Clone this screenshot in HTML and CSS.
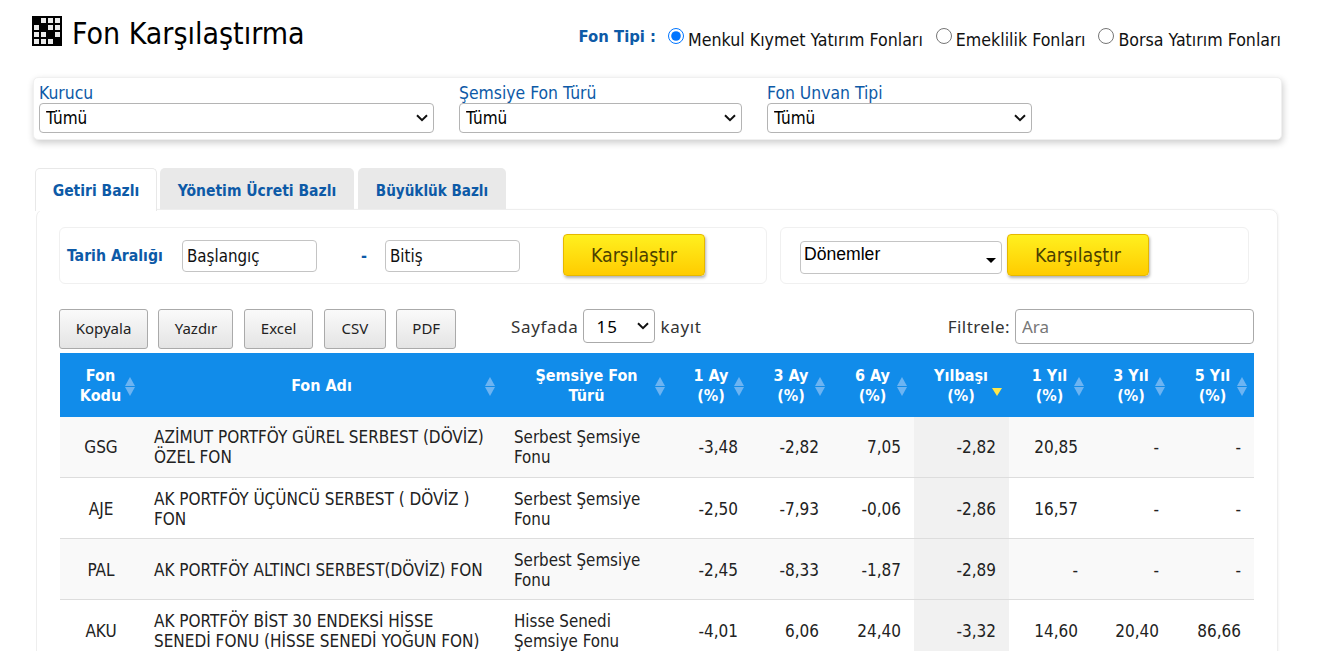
FILE: index.html
```html
<!DOCTYPE html>
<html lang="tr">
<head>
<meta charset="utf-8">
<title>Fon Karşılaştırma</title>
<link rel="stylesheet" href="styles.css">
</head>
<body>
<div class="page">
  <header class="top">
    <h1 class="title">
      <svg class="logo" width="30" height="30" viewBox="0 0 30 30"><rect width="30" height="30" fill="#000"/><g fill="#fff" opacity=".92"><rect x="9" y="2" width="5" height="5"/><rect x="16" y="2" width="5" height="5"/><rect x="23" y="2" width="5" height="5"/><rect x="2" y="9" width="5" height="5"/><rect x="16" y="9" width="5" height="5"/><rect x="23" y="9" width="5" height="5"/><rect x="2" y="16" width="5" height="5"/><rect x="9" y="16" width="5" height="5"/><rect x="23" y="16" width="5" height="5"/><rect x="2" y="23" width="5" height="5"/><rect x="9" y="23" width="5" height="5"/><rect x="16" y="23" width="5" height="5"/></g></svg>
      <span>Fon Karşılaştırma</span>
    </h1>
    <div class="fund-type">
      <span class="fund-label">Fon Tipi :</span>
      <label class="radio"><input type="radio" name="t" checked><span>Menkul Kıymet Yatırım Fonları</span></label>
      <label class="radio"><input type="radio" name="t"><span>Emeklilik Fonları</span></label>
      <label class="radio"><input type="radio" name="t"><span>Borsa Yatırım Fonları</span></label>
    </div>
  </header>

  <section class="filters">
    <div class="filter f1"><label>Kurucu</label><select class="sel"><option>Tümü</option></select></div>
    <div class="filter f2"><label>Şemsiye Fon Türü</label><select class="sel"><option>Tümü</option></select></div>
    <div class="filter f3"><label>Fon Unvan Tipi</label><select class="sel"><option>Tümü</option></select></div>
  </section>

  <nav class="tabs">
    <a class="tab active">Getiri Bazlı</a>
    <a class="tab t2">Yönetim Ücreti Bazlı</a>
    <a class="tab t3">Büyüklük Bazlı</a>
  </nav>

  <section class="panel">
    <div class="ranges">
      <div class="range r1">
        <span class="range-label">Tarih Aralığı</span>
        <input class="date" placeholder="Başlangıç">
        <span class="dash">-</span>
        <input class="date" placeholder="Bitiş">
        <button class="go go1">Karşılaştır</button>
      </div>
      <div class="range r2">
        <div class="period"><span>Dönemler</span><i class="caret"></i></div>
        <button class="go">Karşılaştır</button>
      </div>
    </div>

    <div class="tools">
      <div class="btns">
        <button class="tbtn b1">Kopyala</button>
        <button class="tbtn b2">Yazdır</button>
        <button class="tbtn b3">Excel</button>
        <button class="tbtn b4">CSV</button>
        <button class="tbtn b5">PDF</button>
      </div>
      <div class="length">Sayfada <select class="len"><option>15</option></select> kayıt</div>
      <div class="search">Filtrele: <input class="search-in" placeholder="Ara"></div>
    </div>

    <table class="grid">
      <colgroup>
        <col class="c1"><col class="c2"><col class="c3"><col class="c4"><col class="c5"><col class="c6"><col class="c7"><col class="c8"><col class="c9"><col class="c10">
      </colgroup>
      <thead>
        <tr>
          <th><span class="h">Fon<br>Kodu</span><i class="sort"></i></th>
          <th><span class="h">Fon Adı</span><i class="sort"></i></th>
          <th><span class="h">Şemsiye Fon<br>Türü</span><i class="sort"></i></th>
          <th><span class="h">1 Ay<br>(%)</span><i class="sort"></i></th>
          <th><span class="h">3 Ay<br>(%)</span><i class="sort"></i></th>
          <th><span class="h">6 Ay<br>(%)</span><i class="sort"></i></th>
          <th><span class="h">Yılbaşı<br>(%)</span><i class="sort-on"></i></th>
          <th><span class="h">1 Yıl<br>(%)</span><i class="sort"></i></th>
          <th><span class="h">3 Yıl<br>(%)</span><i class="sort"></i></th>
          <th><span class="h">5 Yıl<br>(%)</span><i class="sort"></i></th>
        </tr>
      </thead>
      <tbody>
        <tr class="odd">
          <td class="code">GSG</td><td class="name">AZİMUT PORTFÖY GÜREL SERBEST (DÖVİZ) ÖZEL FON</td><td class="name type">Serbest Şemsiye Fonu</td>
          <td class="n">-3,48</td><td class="n">-2,82</td><td class="n">7,05</td><td class="n sorted">-2,82</td><td class="n">20,85</td><td class="n">-</td><td class="n">-</td>
        </tr>
        <tr>
          <td class="code">AJE</td><td class="name">AK PORTFÖY ÜÇÜNCÜ SERBEST ( DÖVİZ ) FON</td><td class="name type">Serbest Şemsiye Fonu</td>
          <td class="n">-2,50</td><td class="n">-7,93</td><td class="n">-0,06</td><td class="n sorted">-2,86</td><td class="n">16,57</td><td class="n">-</td><td class="n">-</td>
        </tr>
        <tr class="odd">
          <td class="code">PAL</td><td class="name">AK PORTFÖY ALTINCI SERBEST(DÖVİZ) FON</td><td class="name type">Serbest Şemsiye Fonu</td>
          <td class="n">-2,45</td><td class="n">-8,33</td><td class="n">-1,87</td><td class="n sorted">-2,89</td><td class="n">-</td><td class="n">-</td><td class="n">-</td>
        </tr>
        <tr>
          <td class="code">AKU</td><td class="name">AK PORTFÖY BİST 30 ENDEKSİ HİSSE SENEDİ FONU (HİSSE SENEDİ YOĞUN FON)</td><td class="name type">Hisse Senedi Şemsiye Fonu</td>
          <td class="n">-4,01</td><td class="n">6,06</td><td class="n">24,40</td><td class="n sorted">-3,32</td><td class="n">14,60</td><td class="n">20,40</td><td class="n">86,66</td>
        </tr>
      </tbody>
    </table>
  </section>
</div>
</body>
</html>
```
FILE: styles.css
```css
* { box-sizing: border-box; }
html, body { margin: 0; height: 651px; overflow: hidden; background: #fff; }
body { font-family: "DejaVu Sans Condensed", "DejaVu Sans", sans-serif; font-stretch: condensed; color: #111; }

.page { width: 1250px; margin-left: 32px; }

.top { display: flex; justify-content: space-between; height: 77px; }
.title { display: flex; align-items: flex-start; margin: 16px 0 0; font-size: 30px; font-weight: 400; line-height: 35px; color: #000; }
.logo { display: block; margin-right: 10px; }

.fund-type { display: flex; align-items: flex-start; padding-top: 27px; font-size: 17.65px; line-height: 20px; }
.fund-label { color: #0d5aa7; font-size: 16.5px; font-weight: 700; margin-right: 12px; }
.radio { display: flex; margin-right: 13px; }
.radio:last-child { margin-right: 1px; }
.radio input { width: 16px; height: 16px; margin: 1px 4px 0 0; accent-color: #0075ff; }
.radio span { padding-top: 3px; }

.filters { display: flex; height: 63px; margin-left: 1px; padding: 5px 5px 6px; background: #fff; border: 1px solid #f0f0f0; border-radius: 5px; box-shadow: 1px 3px 7px rgba(0,0,0,.2); }
.filter label { display: block; height: 20px; font-size: 17.4px; line-height: 20px; color: #0d5aa7; }
.sel, .len { appearance: none; background: #fff url("data:image/svg+xml,%3Csvg xmlns='http://www.w3.org/2000/svg' width='12' height='8' viewBox='0 0 12 8'%3E%3Cpath d='M1 1.2l5 5 5-5' fill='none' stroke='%23111' stroke-width='2'/%3E%3C/svg%3E") no-repeat right 5px center; }
.sel { display: block; height: 30px; font: inherit; font-size: 17px; color: #000; border: 1px solid #b4b4b4; border-radius: 4px; padding-left: 6px; }
.f1 { width: 420px; } .f1 .sel { width: 395px; }
.f2 { width: 308px; } .f2 .sel { width: 283px; }
.f3 .sel { width: 265px; }

.tabs { display: flex; height: 41px; margin: 28px 0 0 3px; position: relative; z-index: 1; }
.tab { display: flex; align-items: center; justify-content: center; height: 41px; padding-top: 5px; margin-right: 3px; font-size: 15.5px; font-weight: 700; color: #0d5aa7; background: #e9e9e9; border-radius: 5px 5px 0 0; }
.tab.active { width: 122px; height: 43px; padding-top: 1px; background: #fff; border: 1px solid #e8e8e8; border-bottom: 0; }
.t2 { width: 194px; margin-right: 4px; }
.t3 { width: 148px; font-size: 15.1px; }

.panel { width: 1242px; height: 460px; margin: 0 0 0 4px; padding: 17px 23px 0 22px; border: 1px solid #eee; border-radius: 8px 8px 0 0; box-shadow: 1px 0 2px rgba(0,0,0,.04); }

.ranges { display: flex; gap: 13px; height: 57px; margin-bottom: 25px; }
.range { display: flex; align-items: center; height: 57px; border: 1px solid #f0f0f0; border-radius: 6px; }
.r1 { width: 708px; padding-left: 7px; }
.r2 { width: 469px; padding-left: 19px; }
.range-label { width: 115px; font-size: 15.7px; font-weight: 700; color: #0d5aa7; }
.date { width: 135px; height: 32px; padding: 0 4px; font: inherit; font-size: 16.8px; border: 1px solid #c4c4c4; border-radius: 4px; }
.date::placeholder { color: #111; opacity: 1; }
.dash { width: 68px; padding-right: 18px; text-align: right; font-size: 16px; font-weight: 700; color: #0d5aa7; }
.go { width: 142px; height: 42px; margin-bottom: 2px; padding: 2px 0 0; font: inherit; font-size: 19.3px; color: #4b4000; background: linear-gradient(#fff01f, #ffcc00); border: 1px solid #e6b800; border-radius: 4px; box-shadow: 1px 2px 3px rgba(0,0,0,.3); }
.go1 { margin-left: 43px; }
.period { display: flex; justify-content: space-between; width: 202px; height: 33px; margin: 4px 5px 0 0; padding: 2px 0 0 3px; font-family: "Liberation Sans", sans-serif; font-size: 17.6px; color: #000; border: 1px solid #c4c4c4; border-radius: 4px; position: relative; }
.caret { position: absolute; right: 5px; top: 16px; border-style: solid; border-width: 5px 5px 0; border-color: #000 transparent transparent; }

.tools { display: flex; align-items: flex-start; height: 44px; }
.btns { display: flex; gap: 10.45px; width: 452px; }
.tbtn { height: 40px; font: inherit; font-family: "Noto Sans", sans-serif; font-size: 15px; color: #222; background: linear-gradient(#fafafa, #e4e4e4); border: 1px solid #aaa; border-radius: 3px; padding: 0 0 2px; }
.b1 { width: 89px; } .b2 { width: 75px; } .b3 { width: 69.5px; } .b4 { width: 62px; } .b5 { width: 60px; }
.length { display: flex; align-items: center; gap: 5px; height: 34px; font-family: "Noto Sans", sans-serif; font-size: 17px; letter-spacing: .65px; color: #333; }
.len { width: 72px; height: 34px; padding-left: 12px; font: inherit; letter-spacing: 1px; color: #000; border: 1px solid #aaa; border-radius: 4px; }
.search { display: flex; align-items: center; gap: 5px; height: 35px; margin-left: auto; font-family: "Noto Sans", sans-serif; font-size: 17px; letter-spacing: .4px; color: #333; }
.search-in { width: 239px; height: 35px; padding: 0 6px; font: inherit; border: 1px solid #aaa; border-radius: 4px; }
.search-in::placeholder { color: #777; opacity: 1; }

.grid { width: 1194px; margin-left: 1px; border-collapse: separate; border-spacing: 0; table-layout: fixed; }
.c1 { width: 82px; } .c2 { width: 360px; } .c3 { width: 170px; } .c4 { width: 79px; } .c5 { width: 81px; } .c6 { width: 82px; } .c7 { width: 95px; } .c8 { width: 82px; } .c9 { width: 81px; } .c10 { width: 82px; }
.grid th { position: relative; height: 64px; padding: 2px 1px 0 0; background: #118cea; color: #fff; font-size: 16px; line-height: 20px; font-weight: 700; text-align: center; }
.grid td { height: 61px; padding: 0 13px 0 12px; font-size: 17px; line-height: 20px; color: #222; border-bottom: 1px solid #ddd; }
.grid tbody tr + tr td { padding-top: 2px; }
.odd td { background: #f9f9f9; }
.grid .code { text-align: center; padding-left: 0; padding-right: 0; }
.grid .name { padding-right: 10px; }
.grid .type { font-size: 16.8px; }
.grid .n { text-align: right; }
.grid .sorted { background: #f1f1f1; }
.sort, .sort-on { position: absolute; right: 6px; top: 24px; width: 11px; height: 19px; }
.sort::before, .sort::after, .sort-on::after { content: ""; position: absolute; left: 0; border-style: solid; border-color: transparent; }
.sort::before { top: 0; border-width: 0 5.5px 9px; border-bottom-color: #6db4f2; }
.sort::after { bottom: 0; border-width: 9px 5.5px 0; border-top-color: #6db4f2; }
.sort-on::after { bottom: 0; border-width: 8px 5.5px 0; border-top-color: #ffe74a; }
```
